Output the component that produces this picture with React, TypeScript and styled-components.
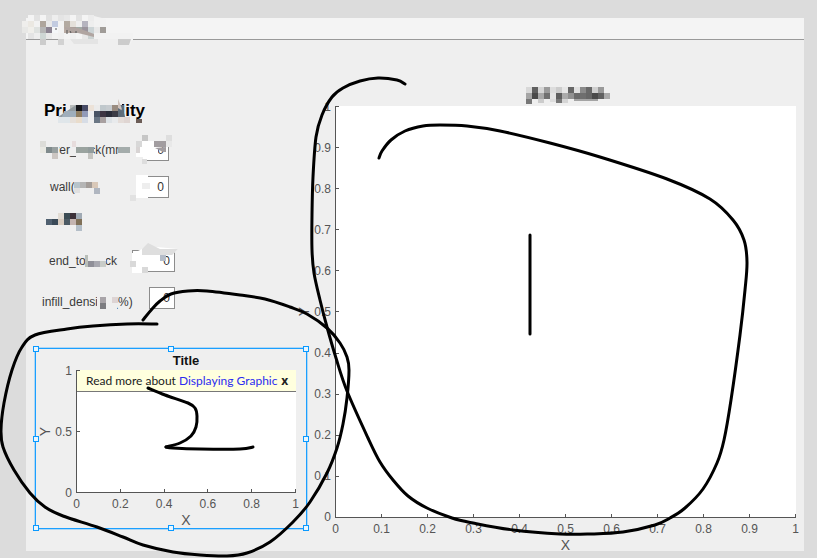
import React from "react";
import styled, { createGlobalStyle } from "styled-components";

const Global = createGlobalStyle`
  *, *::before, *::after { box-sizing: border-box; }
  body {
    margin: 0;
    background: #dcdcdc;
    font-family: "Liberation Sans", Arial, sans-serif;
    font-size: 12px;
    color: #3a3a3a;
  }
`;

const Page = styled.div`
  position: relative;
  display: flex;
  min-height: 100vh;
  padding: 18px 13px 7px 26px;
  overflow: hidden;
`;

const Window = styled.main`
  flex: 1;
  min-width: 0;
  display: flex;
  flex-direction: column;
  background: #efefef;
`;

const TabStrip = styled.header`
  height: 22px;
  background: #f4f4f4;
  border-bottom: 1px solid #999;
`;

const Canvas = styled.div`
  flex: 1;
  display: grid;
  grid-template-columns: minmax(0, 272fr) minmax(0, 506fr);
`;

const Settings = styled.section`
  display: flex;
  flex-direction: column;
  padding: 60px 0 22px 9px;
`;

const Heading = styled.h1`
  margin: 0 0 17px;
  padding-left: 9px;
  font-size: 17px;
  line-height: 22px;
  color: #000;
`;

const Form = styled.form`
  display: flex;
  flex-direction: column;
  gap: 15px;
  margin-bottom: 39px;
`;

const Row = styled.div<{ $indent: number; $end: number; $low?: boolean }>`
  display: flex;
  align-items: ${(p) => (p.$low ? "flex-end" : "center")};
  justify-content: space-between;
  height: 22px;
  width: ${(p) => p.$end}px;
  padding-left: ${(p) => p.$indent}px;
`;

const Label = styled.label`
  line-height: 14px;
  white-space: nowrap;
`;

const Field = styled.input<{ $width: number }>`
  width: ${(p) => p.$width}px;
  height: 22px;
  padding: 0 4px;
  border: 1px solid #8c8c8c;
  border-radius: 0;
  outline: 0;
  background: #fff;
  color: #333;
  font: inherit;
  text-align: right;
`;

const Selection = styled.div`
  position: relative;
  flex: 1;
  display: flex;
  margin-right: -9px;
  padding: 3px 10px 2px 3px;
  border: 1px solid #1a9fff;
  outline: 1px solid rgba(26, 159, 255, 0.3);
`;

const Handle = styled.span<{ $x: number; $y: number }>`
  position: absolute;
  left: ${(p) => p.$x}%;
  top: ${(p) => p.$y}%;
  width: 6px;
  height: 6px;
  margin: -3px;
  border: 1px solid #0a99ff;
  background: #e8f6ff;
`;

const ChartPanel = styled.section`
  display: flex;
  padding: 66px 8px 0 0;
`;

const ChartGrid = styled.div<{ $ticks: number }>`
  flex: 1;
  min-width: 0;
  display: grid;
  grid-template-columns: 13px ${(p) => p.$ticks}px minmax(0, 1fr);
  grid-template-rows: auto minmax(0, 1fr) 20px 13px;
  color: #555;
`;

const ChartTitle = styled.h2`
  grid-column: 3;
  margin: 0;
  font-size: 13px;
  line-height: 18px;
  text-align: center;
  color: #111;
`;

const YName = styled.div`
  grid-area: 2 / 1;
  align-self: center;
  font-size: 14px;
  line-height: 13px;
  writing-mode: vertical-rl;
  transform: rotate(180deg);
`;

const XName = styled.div`
  grid-area: 4 / 3;
  text-align: center;
  font-size: 14px;
  line-height: 14px;
`;

const YTicks = styled.div`
  grid-area: 2 / 2;
  z-index: 1;
  display: flex;
  flex-direction: column-reverse;
  justify-content: space-between;
`;

const YTick = styled.div`
  display: flex;
  align-items: center;
  justify-content: flex-end;
  gap: 4px;
  height: 1px;
  &::after {
    content: "";
    width: 4px;
    height: 1px;
    margin-right: -4px;
    background: #555;
  }
`;

const XTicks = styled.div`
  grid-area: 3 / 3;
  z-index: 1;
  display: flex;
  justify-content: space-between;
`;

const XTick = styled.div`
  display: flex;
  flex-direction: column;
  align-items: center;
  gap: 4px;
  width: 1px;
  line-height: 14px;
  &::before {
    content: "";
    width: 1px;
    height: 4px;
    margin-top: -4px;
    background: #555;
  }
`;

const Plot = styled.div`
  grid-area: 2 / 3;
  background: #fff;
  border-left: 1px solid #555;
  border-bottom: 1px solid #555;
`;

const Notice = styled.div`
  display: flex;
  align-items: center;
  justify-content: space-between;
  height: 22px;
  padding: 0 4px 0 9px;
  background: #ffffde;
  border-bottom: 1px solid #777;
  color: #222;
  font-family: Lato, "Open Sans", sans-serif;
  font-size: 12px;
  line-height: 20px;
`;

const NoticeText = styled.span`
  white-space: nowrap;
`;

const DocLink = styled.a`
  color: #2b2bf0;
  text-decoration: none;
`;

const CloseButton = styled.button`
  width: 15px;
  padding: 0;
  border: 0;
  background: none;
  color: #222;
  font: 700 12px/16px "Open Sans", sans-serif;
`;

const Overlay = styled.svg`
  position: absolute;
  inset: 0;
  z-index: 2;
  width: 100%;
  height: 100%;
  pointer-events: none;
`;

type ChartProps = {
  title?: string;
  xTicks: string[];
  yTicks: string[];
  tickWidth: number;
  children?: React.ReactNode;
};

function Chart({ title, xTicks, yTicks, tickWidth, children }: ChartProps) {
  return (
    <ChartGrid $ticks={tickWidth}>
      {title && <ChartTitle>{title}</ChartTitle>}
      <YName>Y</YName>
      <YTicks>
        {yTicks.map((t) => (
          <YTick key={t}>{t}</YTick>
        ))}
      </YTicks>
      <Plot>{children}</Plot>
      <XTicks>
        {xTicks.map((t) => (
          <XTick key={t}>{t}</XTick>
        ))}
      </XTicks>
      <XName>X</XName>
    </ChartGrid>
  );
}

const tenths = ["0", "0.1", "0.2", "0.3", "0.4", "0.5", "0.6", "0.7", "0.8", "0.9", "1"];
const fifths = ["0", "0.2", "0.4", "0.6", "0.8", "1"];
const halves = ["0", "0.5", "1"];

const fields = [
  { id: "layer", label: "layer_thick(mm)", indent: 9, end: 134, width: 33 },
  { id: "wall", label: "wall(mm)", indent: 15, end: 134, width: 33 },
  { id: "fill", label: "", indent: 11, end: 134, width: 0 },
  { id: "end", label: "end_topthick", indent: 14, end: 140, width: 43 },
  { id: "infill", label: "infill_density\u00a0\u00a0(%)", indent: 7, end: 140, width: 26, low: true },
];

type Point = [number, number];

/* Catmull-Rom spline through the pen samples. */
function smooth(pts: Point[]): string {
  let d = `M${pts[0][0]} ${pts[0][1]}`;
  for (let i = 0; i < pts.length - 1; i++) {
    const a = pts[i - 1] ?? pts[i];
    const b = pts[i];
    const c = pts[i + 1];
    const e = pts[i + 2] ?? c;
    d += `C${b[0] + (c[0] - a[0]) / 6} ${b[1] + (c[1] - a[1]) / 6} ${c[0] - (e[0] - b[0]) / 6} ${c[1] - (e[1] - b[1]) / 6} ${c[0]} ${c[1]}`;
  }
  return d;
}

const strokes: Point[][] = [
  [[405, 84], [397, 80], [378, 78], [360, 81], [343, 88], [332, 97], [322, 115], [316, 137], [313, 177], [312, 215], [312, 250], [314, 273], [320, 300], [327, 327], [336, 358], [347, 391], [368, 438], [380, 462], [393, 480], [408, 496], [427, 508], [452, 518], [473, 523], [513, 530], [560, 534], [590, 534], [623, 532], [655, 525], [670, 518], [685, 508], [703, 489], [717, 463], [724, 440], [731, 400], [740, 335], [745, 290], [747, 262], [744, 240], [733, 220], [710, 199], [667, 179], [600, 157], [550, 143], [500, 131], [467, 126], [440, 125], [423, 126], [405, 131], [391, 140], [382, 151], [379, 158]],
  [[157, 324], [127, 324], [93, 326], [67, 329], [35, 335], [22, 347], [12, 370], [4, 403], [1, 430], [3, 447], [14, 470], [30, 493], [45, 507], [63, 516], [97, 527], [123, 537], [143, 545], [173, 552], [200, 555], [227, 556], [247, 553], [270, 542], [293, 522], [310, 502], [327, 473], [337, 448], [343, 424], [347, 398], [349, 370], [347, 357], [340, 343], [327, 328], [307, 314], [290, 307], [265, 299], [240, 295], [207, 291], [188, 291], [171, 294], [160, 301], [152, 309], [143, 320]],
  [[148, 388], [165, 395], [188, 403], [195, 408], [197, 416], [196, 427], [191, 436], [180, 443], [166, 447]],
  [[166, 447], [173, 448], [200, 449], [240, 449], [253, 447]],
  [[530, 235], [530, 334]],
];

/* [x, y, width, height, colour] */
type Block = [number, number, number, number, string];

/* Rows of 6px cells: [x, y, colours]. */
const cellRows: [number, number, string][] = [
  [28, 15, "f4f4f4 e2e2e2 f4f4f4 e0e0e0 eeeeee e4e4e4 e8e8e8 f4f4f4 e2e2e2 f4f4f4 ececec"],
  [22, 21, "efeeec ebe8e2 f2f2f2 aea59c e8e8e8 c2cbe0 f2f2f2 b3aaa1 e4e0da eeeeee b5b4bf eeeeee dfdfe0 f0f0f0"],
  [22, 27, "e8e8e6 f0efeb dfe2e0 b5b5b5 8b8391 f4f6f8 f2f2f2 b9aca4 a99c98 a0aaa6 9a949c ccd4d6 e8e8e8 a09c98"],
  [28, 33, "e4e4e4 eeeeee ced6d4 e8e8e8 f2f2f2 f0f0f0 f4f4f4 f0f0f0 f4f4f4 e8e8e8 ccd3d3 f4f4f4"],
  [526, 87, "d8d8d8 606060 d5d5d5 9a9a9a dddddd cccccc e6e6e6 666666 e0e0e0 8a8a8a 686868 d0d0d0 999999"],
  [526, 93, "a5a5a5 4a4a4a a8a8a8 707070 e4e4e4 5e5e5e aaaaaa 909090 6a6a6a 6e6e6e 666666 4a4a4a 606060 aaaaaa"],
  [70, 105, "b9bcbc 15151a 474b66 ece2d8 ebebeb c0c8cc c6cbcf 9a8c80 5f6e7c"],
  [64, 111, "a0aebb 9faebb 917f62 929bb8 eeeeee 4a5464 3d3442 2a2c38 3c3c46 5d6b78"],
  [58, 117, "e0e6ea dfe6ea e6e0da e9dccb d7dde6 efefef 6a7684 a8a0a0 dde2e6 e8eaec e4dcd8 dfd5d2"],
  [40, 141, "dcdcd8"],
  [40, 147, "e8e8e2 7f8a8c 98a0a0"],
  [76, 147, "9aa39f 9aa39f 929c9c"],
  [118, 147, "a4acab a4acab"],
  [74, 182, "b7c4ca b5b5b5 a39c98 d9c8b8"],
  [58, 213, "e2dcd4 3c4c54 3c3038 a0aab4"],
  [46, 219, "506070 3a4a58 d8ccc0 4c5a64 c4b4b0 807058"],
  [88, 261, "8f8f98 a8a8b0 c8ccc8"],
];

const blanks: Block[] = [
  [58, 38, 74, 3, "#efefef"],
  [66, 104, 56, 20, "#efefef"],
  [42, 142, 17, 16, "#efefef"],
  [76, 142, 18, 16, "#efefef"],
  [118, 142, 15, 16, "#efefef"],
  [75, 178, 27, 15, "#efefef"],
  [135, 138, 35, 9, "#efefef"],
  [136, 147, 18, 10, "#ffffff"],
  [135, 157, 8, 6, "#efefef"],
  [136, 175, 12, 23, "#ffffff"],
  [86, 254, 20, 15, "#efefef"],
  [97, 295, 20, 15, "#efefef"],
];

const loose: Block[] = [
  [40, 39, 6, 6, "#cccccc"],
  [58, 39, 6, 6, "#d2d2d2"],
  [526, 99, 6, 5, "#777777"],
  [538, 99, 6, 4, "#cccccc"],
  [550, 99, 6, 3, "#dddddd"],
  [556, 99, 6, 4, "#777777"],
  [562, 99, 6, 4, "#d5d5d5"],
  [574, 99, 24, 2, "#a4a4a4"],
  [136, 119, 6, 4, "#6b5c56"],
  [52, 153, 6, 6, "#ccc6c2"],
  [72, 141, 4, 6, "#e6dcdc"],
  [88, 153, 5, 6, "#c4c4c0"],
  [136, 141, 6, 6, "#d8d8d8"],
  [136, 147, 4, 6, "#d8d4d4"],
  [142, 135, 6, 6, "#c6c6c6"],
  [142, 141, 12, 6, "#ffffff"],
  [154, 141, 12, 6, "#a29da0"],
  [166, 135, 6, 6, "#dedede"],
  [166, 141, 6, 6, "#e8e8e8"],
  [142, 159, 5, 5, "#dddddd"],
  [94, 188, 6, 6, "#b0b6c0"],
  [74, 188, 6, 5, "#e0e0e0"],
  [142, 183, 8, 6, "#eeeeee"],
  [130, 195, 6, 6, "#e2e2e2"],
  [76, 225, 6, 6, "#b4bec8"],
  [85, 255, 3, 12, "#b9beb8"],
  [100, 297, 6, 6, "#a8a4a8"],
  [100, 303, 6, 6, "#7c7c80"],
  [112, 297, 6, 6, "#ddd4d4"],
];

function Blocks({ items }: { items: Block[] }) {
  return (
    <>
      {items.map(([x, y, w, h, c], i) => (
        <rect key={i} x={x} y={y} width={w} height={h} fill={c} />
      ))}
    </>
  );
}

function Markup() {
  return (
    <Overlay viewBox="0 0 817 558" preserveAspectRatio="none" aria-hidden="true">
      <g shapeRendering="crispEdges">
        <Blocks items={blanks} />
        {cellRows.map(([x, y, colours], r) =>
          colours.split(" ").map((c, i) => (
            <rect key={`${r}-${i}`} x={x + i * 6} y={y} width={6} height={6} fill={`#${c}`} />
          )),
        )}
        <Blocks items={loose} />
      </g>
      <path d="M64 27L78 28 94 34V37L66 30Z" fill="#b0a5a1" />
      <path d="M94 16L106 19V27H94Z" fill="#f2f2f2" />
      <path d="M94 33H133V40L130 45H118V39H94Z" fill="#f2f2f2" />
      <path d="M118 39H131L129 45H118Z" fill="#cccccc" />
      <path d="M70 39H98V44H74Z" fill="#e4e4e4" />
      <path d="M67 30v4M70 31l1 2M76 31v2M55 29h2" stroke="#555" />
      <path d="M58 117L76 105V117Z" fill="#929a9e" />
      <path d="M64 111h12v6H62z" fill="#9faebb" />
      <path d="M118 99L123 111 118 108Z" fill="#cfc2bb" />
      <path d="M122 105L125 117H121Z" fill="#5f6e7c" />
      <path d="M154 147H160L165 153H168V148H158V158H154Z" fill="#fff" />
      <path d="M155 148L166 147V152H163Z" fill="#a29da0" />
      <path d="M134 253L142 249 146 246 178 249 172 255H158L154 268 142 273H132V253Z" fill="#fff" />
      <path d="M142 249L148 243 160 249 178 249 172 255H142Z" fill="#dedede" />
      <path d="M160 255h6v6h-6z" fill="#b4bcc8" />
      <path d="M130 261h6v6h-6zM142 267h6v6h-6z" fill="#d9d9d9" />
      <g fill="none" stroke="#000" strokeWidth="3" strokeLinecap="round" strokeLinejoin="round">
        {strokes.map((pts, i) => (
          <path key={i} d={smooth(pts)} />
        ))}
      </g>
    </Overlay>
  );
}

const handles: Point[] = [[0, 0], [50, 0], [100, 0], [0, 50], [100, 50], [0, 100], [50, 100], [100, 100]];

export default function App() {
  return (
    <Page>
      <Global />
      <Window>
        <TabStrip />
        <Canvas>
          <Settings>
            <Heading>Print Quality</Heading>
            <Form>
              {fields.map((f) => (
                <Row key={f.id} $indent={f.indent} $end={f.end} $low={f.low}>
                  {f.label && (
                    <>
                      <Label htmlFor={f.id}>{f.label}</Label>
                      <Field id={f.id} $width={f.width} defaultValue="0" />
                    </>
                  )}
                </Row>
              ))}
            </Form>
            <Selection>
              <Chart title="Title" xTicks={fifths} yTicks={halves} tickWidth={24}>
                <Notice>
                  <NoticeText>
                    Read more about <DocLink href="#graphics">Displaying Graphic</DocLink>
                  </NoticeText>
                  <CloseButton type="button" aria-label="Close">x</CloseButton>
                </Notice>
              </Chart>
              {handles.map(([x, y]) => (
                <Handle key={`${x}-${y}`} $x={x} $y={y} />
              ))}
            </Selection>
          </Settings>
          <ChartPanel>
            <Chart xTicks={tenths} yTicks={tenths} tickWidth={24} />
          </ChartPanel>
        </Canvas>
      </Window>
      <Markup />
    </Page>
  );
}
